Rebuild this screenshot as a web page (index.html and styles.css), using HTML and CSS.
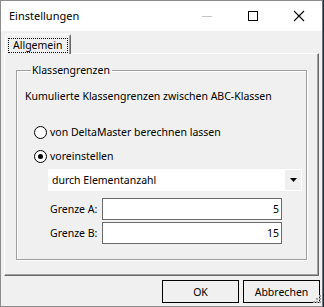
FILE: index.html
```html
<!DOCTYPE html>
<html lang="de">
<head>
<meta charset="utf-8">
<title>Einstellungen</title>
<link rel="stylesheet" href="styles.css">
</head>
<body>
<div class="window">
  <div class="titlebar">
    <span class="title">Einstellungen</span>
    <div class="controls">
      <svg class="ctl" width="46" height="30" viewBox="0 0 46 30"><line x1="18" y1="15.5" x2="28" y2="15.5" stroke="#c4c4c4" stroke-width="1"/></svg>
      <svg class="ctl" width="46" height="30" viewBox="0 0 46 30"><rect x="18.5" y="10.5" width="9" height="9" fill="none" stroke="#000" stroke-width="1"/></svg>
      <svg class="ctl" width="46" height="30" viewBox="0 0 46 30"><path d="M18 10 L28 20 M28 10 L18 20" stroke="#000" stroke-width="1.1" fill="none"/></svg>
    </div>
  </div>
  <div class="client">
    <div class="tabstrip">
      <div class="tab"><span class="focus">Allgemein</span></div>
    </div>
    <div class="panel">
      <fieldset class="group">
        <legend class="legend">Klassengrenzen</legend>
        <p class="desc">Kumulierte Klassengrenzen zwischen ABC-Klassen</p>
        <div class="radio first"><span class="circle"></span><span>von DeltaMaster berechnen lassen</span></div>
        <div class="radio"><span class="circle checked"></span><span>voreinstellen</span></div>
        <div class="combo">
          <span class="combo-text">durch Elementanzahl</span>
          <span class="drop"><svg width="7" height="4" viewBox="0 0 7 4"><path d="M0 0 H7 L3.5 4 Z" fill="#000"/></svg></span>
        </div>
        <div class="field first-field"><span class="lbl">Grenze A:</span><span class="input">5</span></div>
        <div class="field"><span class="lbl">Grenze B:</span><span class="input">15</span></div>
      </fieldset>
    </div>
    <div class="footer">
      <button class="btn">OK</button>
      <button class="btn">Abbrechen</button>
    </div>
  </div>
  <svg class="grip" width="10" height="10" viewBox="0 0 10 10">
    <g fill="#a0a0a0">
      <rect x="8" y="0" width="2" height="2"/>
      <rect x="5" y="3" width="2" height="2"/><rect x="8" y="3" width="2" height="2"/>
      <rect x="2" y="6" width="2" height="2"/><rect x="5" y="6" width="2" height="2"/><rect x="8" y="6" width="2" height="2"/>
    </g>
  </svg>
</div>
</body>
</html>
```
FILE: styles.css
```css
html, body {
  margin: 0;
  padding: 0;
}
body {
  width: 324px;
  height: 307px;
  background: #1b2840;
  font-family: "Noto Sans", "Open Sans", sans-serif;
  font-size: 10.5px;
  color: #000;
}
.window {
  position: relative;
  box-sizing: border-box;
  width: 323px;
  height: 307px;
  border: 1px solid #8c8c8c;
  border-right-color: #6d7480;
  background: #f0f0f0;
  display: flex;
  flex-direction: column;
}
.titlebar {
  height: 30px;
  background: #fff;
  display: flex;
  align-items: center;
  justify-content: space-between;
  flex: none;
}
.title {
  padding-left: 8px;
  font-size: 11px;
  line-height: 16px;
}
.controls {
  display: flex;
  align-self: stretch;
}
.ctl {
  display: block;
}
.client {
  flex: 1;
  display: flex;
  flex-direction: column;
}
.tabstrip {
  display: flex;
  padding: 3px 0 0 4px;
  height: 19px;
}
.tab {
  position: relative;
  z-index: 1;
  box-sizing: border-box;
  width: 66px;
  height: 20px;
  background: #f0f0f0;
  border-top: 1px solid #fff;
  border-left: 1px solid #fff;
  border-right: 1px solid #696969;
  border-radius: 2px 2px 0 0;
  box-shadow: inset -1px 0 0 #a0a0a0;
  padding: 3px 2px 0 2px;
}
.focus {
  display: block;
  box-sizing: border-box;
  height: 15px;
  border: 1px dotted #000;
  line-height: 13px;
  padding-left: 4px;
  font-size: 10.5px;
}
.panel {
  box-sizing: border-box;
  margin: 0 3px 0 3px;
  height: 223px;
  border-top: 1px solid #fff;
  border-left: 1px solid #fff;
  border-right: 1px solid #696969;
  border-bottom: 1px solid #696969;
  box-shadow: inset -1px -1px 0 #a0a0a0;
  padding-top: 8px;
}
.group {
  box-sizing: border-box;
  width: 291px;
  margin: 0 0 0 11px;
  padding: 10px 0 15px 8px;
  border: 1px solid #a0a0a0;
  box-shadow: 1px 1px 0 #fff, inset 1px 1px 0 #fff;
  min-width: 0;
}
.legend {
  margin-left: 6px;
  padding: 0 2px 0 1px;
  line-height: 16px;
}
.desc {
  margin: 0;
  line-height: 16px;
}
.radio {
  display: flex;
  align-items: center;
  height: 16px;
  margin-left: 9px;
  margin-top: 8px;
}
.radio.first {
  margin-top: 20px;
}
.circle {
  box-sizing: border-box;
  width: 13px;
  height: 13px;
  border: 1px solid #000;
  border-radius: 50%;
  background: #fff;
  margin-right: 3px;
  display: flex;
  align-items: center;
  justify-content: center;
}
.circle.checked::after {
  content: "";
  width: 5px;
  height: 5px;
  border-radius: 50%;
  background: #000;
}
.combo {
  box-sizing: border-box;
  display: flex;
  align-items: center;
  justify-content: space-between;
  margin: 5px 0 0 23px;
  width: 254px;
  height: 22px;
  background: #fff;
  border: 1px solid #fff;
  padding-left: 3px;
}
.drop {
  width: 16px;
  align-self: stretch;
  background: #f0f0f0;
  display: flex;
  align-items: center;
  justify-content: center;
}
.drop svg {
  display: block;
}
.field {
  display: flex;
  align-items: center;
  margin-left: 25px;
  margin-top: 2px;
}
.field.first-field {
  margin-top: 7px;
}
.lbl {
  width: 52px;
}
.input {
  box-sizing: border-box;
  width: 180px;
  height: 22px;
  border: 1px solid #6b6b6b;
  background: #fff;
  text-align: right;
  line-height: 20px;
  padding-right: 2px;
}
.footer {
  display: flex;
  justify-content: flex-end;
  gap: 4px;
  padding: 4px 2px 0 0;
}
.btn {
  box-sizing: border-box;
  width: 77px;
  height: 23px;
  border: 1px solid #000;
  background: #f0f0f0;
  font-family: inherit;
  font-size: 10.5px;
  color: #000;
  padding: 0;
  margin: 0;
}
.grip {
  position: absolute;
  right: 1px;
  bottom: 1px;
}
```
